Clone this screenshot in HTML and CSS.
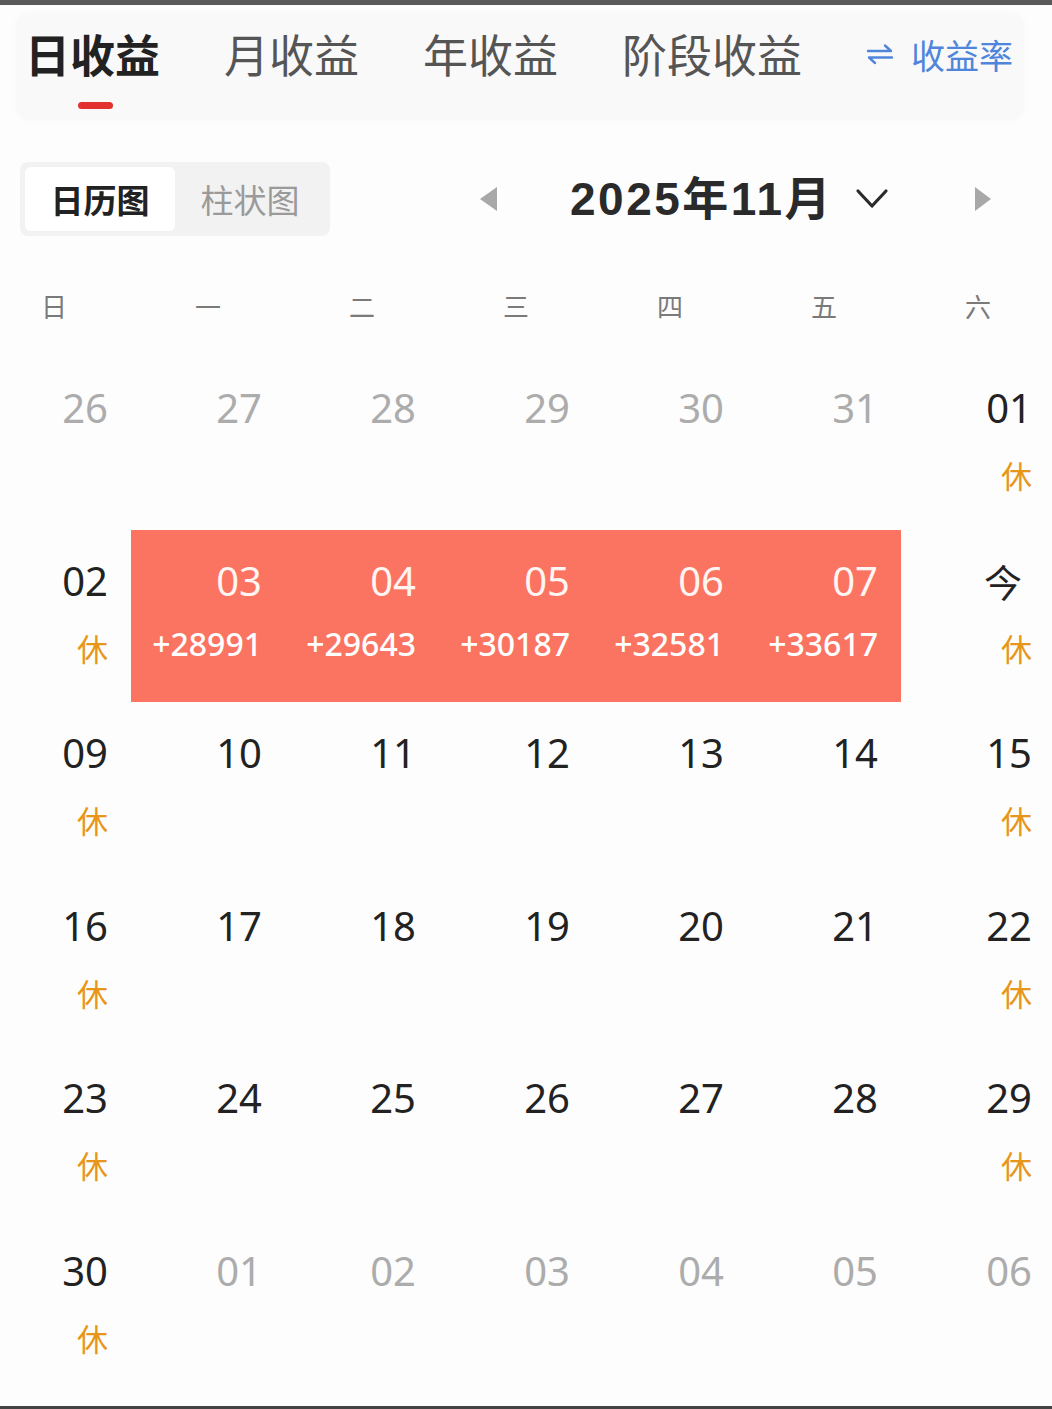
FILE: index.html
```html
<!DOCTYPE html>
<html lang="zh-CN">
<head>
    <meta charset="UTF-8">
    <meta name="viewport" content="width=device-width, initial-scale=1.0">
    <title>日收益</title>
    <link rel="stylesheet" href="styles.css">
</head>
<body>
    <div class="topbar"></div>

    <div class="tabs">
        <div class="tab active">
            <span>日收益</span>
            <i class="indicator"></i>
        </div>
        <div class="tab"><span>月收益</span></div>
        <div class="tab"><span>年收益</span></div>
        <div class="tab"><span>阶段收益</span></div>
        <div class="rate-switch">
            <svg width="28" height="24" viewBox="0 0 28 24" fill="none" stroke="currentColor" stroke-width="2.4" stroke-linecap="round" stroke-linejoin="round">
                <path d="M2 9 H25 L19 3.5"/>
                <path d="M26 15.5 H3 L9 21"/>
            </svg>
            <span>收益率</span>
        </div>
    </div>

    <div class="toolbar">
        <div class="segment">
            <div class="seg-item active">日历图</div>
            <div class="seg-item">柱状图</div>
        </div>
        <div class="month-nav">
            <span class="arrow left"></span>
            <span class="month-title">2025年11月</span>
            <svg class="chevron" width="34" height="24" viewBox="0 0 34 24" fill="none" stroke="#2a2a2a" stroke-width="3.2" stroke-linecap="round" stroke-linejoin="round">
                <path d="M3 4 L17 19 L31 4"/>
            </svg>
            <span class="arrow right"></span>
        </div>
    </div>

    <div class="weekdays">
        <div>日</div><div>一</div><div>二</div><div>三</div><div>四</div><div>五</div><div>六</div>
    </div>

    <div class="calendar" id="calendar"></div>

    <div class="bottombar"></div>

    <script>
        // prev / next month days are greyed out
        let days = [
            ["26", "other"], ["27", "other"], ["28", "other"], ["29", "other"], ["30", "other"], ["31", "other"], ["01", "rest"],
            ["02", "rest"], ["03", "gain", "+28991"], ["04", "gain", "+29643"], ["05", "gain", "+30187"], ["06", "gain", "+32581"], ["07", "gain", "+33617"], ["今", "today"],
            ["09", "rest"], ["10"], ["11"], ["12"], ["13"], ["14"], ["15", "rest"],
            ["16", "rest"], ["17"], ["18"], ["19"], ["20"], ["21"], ["22", "rest"],
            ["23", "rest"], ["24"], ["25"], ["26"], ["27"], ["28"], ["29", "rest"],
            ["30", "rest"], ["01", "other"], ["02", "other"], ["03", "other"], ["04", "other"], ["05", "other"], ["06", "other"]
        ];

        let calendar = document.getElementById("calendar");
        days.forEach(day => {
            let [num, type, amount] = day;
            let cell = `<div class="cell ${type || ""}">
                <span class="num">${num}</span>`;
            if (type === "rest" || type === "today") cell += `<span class="rest-tag">休</span>`;
            if (type === "gain") cell += `<span class="amount">${amount}</span>`;
            cell += `</div>`;
            calendar.innerHTML += cell;
        });
    </script>
</body>
</html>
```

FILE: styles.css
```css
body {
    margin: 0;
    width: 1052px;
    height: 1409px;
    overflow: hidden;
    background: #fdfdfd;
    font-family: "Noto Sans", "Noto Sans CJK SC", sans-serif;
    color: #222;
    display: flex;
    flex-direction: column;
}
.topbar {
    height: 5px;
    background: #5a5a5a;
    flex-shrink: 0;
}
.bottombar {
    height: 3px;
    background: #444;
    margin-top: auto;
    flex-shrink: 0;
}

/* top tabs */
.tabs {
    display: flex;
    align-items: flex-start;
    gap: 64px;
    margin: 8px 28px 0 16px;
    padding: 16px 0 11px 9px;
    height: 80px;
    background: #f9f9fa;
    border-radius: 14px;
    box-shadow: 0 0 8px rgba(0, 0, 0, 0.025);
}
.tab {
    display: flex;
    flex-direction: column;
    align-items: center;
    font-family: "Noto Sans CJK SC", sans-serif;
    font-size: 45px;
    line-height: 50px;
    color: #555;
}
.tab.active {
    color: #222;
    font-weight: 700;
}
.indicator {
    display: block;
    width: 35px;
    height: 7px;
    margin-top: 23px;
    margin-left: 6px;
    border-radius: 4px;
    background: #e3312f;
}
.rate-switch {
    display: flex;
    align-items: center;
    gap: 17px;
    height: 50px;
    color: #4f86db;
    font-family: "Noto Sans CJK SC", sans-serif;
    font-size: 34px;
}

/* segment + month picker */
.toolbar {
    display: flex;
    align-items: center;
    margin: 42px 0 0 20px;
}
.segment {
    display: flex;
    width: 300px;
    height: 64px;
    padding: 5px;
    background: #f2f2f2;
    border-radius: 8px;
}
.seg-item {
    flex: 1;
    display: flex;
    align-items: center;
    justify-content: center;
    font-family: "Noto Sans CJK SC", sans-serif;
    font-size: 33px;
    color: #9a9a9a;
    border-radius: 6px;
}
.seg-item.active {
    background: #fff;
    color: #222;
    font-weight: 700;
}
.month-nav {
    display: flex;
    align-items: center;
    margin-left: 150px;
}
.arrow {
    width: 0;
    height: 0;
    border-top: 12px solid transparent;
    border-bottom: 12px solid transparent;
}
.arrow.left {
    border-right: 17px solid #a8a8a8;
    margin-right: 73px;
}
.arrow.right {
    border-left: 16px solid #a8a8a8;
    margin-left: 86px;
}
.month-title {
    font-family: "Liberation Sans", "Noto Sans CJK SC", sans-serif;
    font-size: 46px;
    font-weight: 700;
    letter-spacing: 2.5px;
    line-height: 60px;
    white-space: nowrap;
    width: 262px;
    color: #2a2a2a;
}
.chevron {
    margin-left: 23px;
}

/* calendar */
.weekdays {
    display: grid;
    grid-template-columns: repeat(7, 154px);
    margin: 44px 0 0 -23px;
    height: 50px;
    align-items: center;
    font-family: "Noto Sans CJK SC", sans-serif;
    font-size: 26px;
    color: #7a7a7a;
    text-align: center;
}
.calendar {
    display: grid;
    grid-template-columns: repeat(7, 154px);
    grid-auto-rows: 172.6px;
    margin: 27px 0 0 -23px;
}
.cell {
    display: flex;
    flex-direction: column;
    align-items: flex-end;
    padding: 26px 23px 0 0;
}
.num {
    font-size: 40px;
    line-height: 50px;
    color: #222;
}
.cell.other .num {
    color: #acacac;
}
.rest-tag {
    margin-top: 22px;
    line-height: 40px;
    font-family: "Noto Sans CJK SC", sans-serif;
    font-size: 31px;
    color: #e8961a;
}
.cell.gain {
    background: #fb7462;
}
.cell.gain .num {
    color: #fff5f2;
}
.amount {
    margin-top: 18px;
    line-height: 40px;
    font-size: 32px;
    font-weight: 500;
    color: #fff;
}
.cell.today .num {
    font-family: "Noto Sans CJK SC", sans-serif;
    font-size: 38px;
    padding-right: 10px;
}
```
